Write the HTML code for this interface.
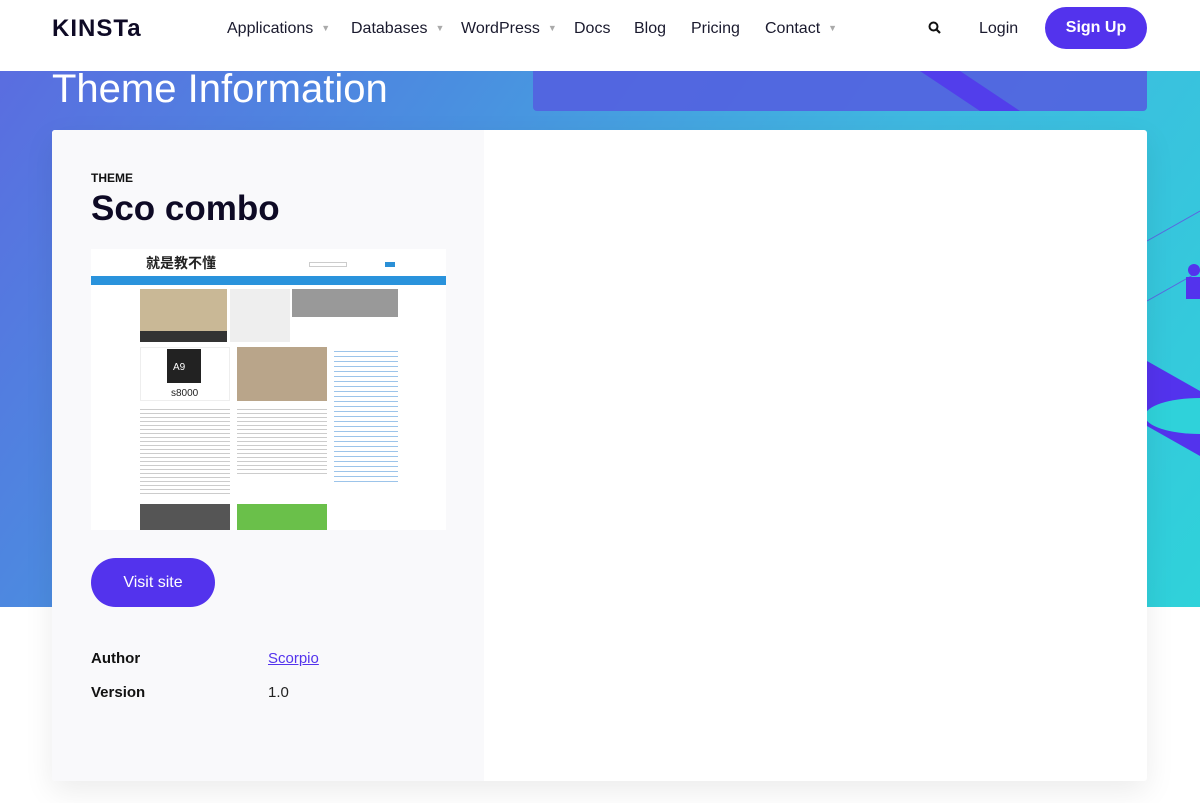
<!DOCTYPE html>
<html><head><meta charset="utf-8"><style>
*{margin:0;padding:0;box-sizing:border-box}
body{width:1200px;height:803px;overflow:hidden;background:#fff;font-family:"Liberation Sans","Noto Sans CJK TC",sans-serif;position:relative}
.hdr{position:absolute;top:0;left:0;width:1200px;height:71px;background:#fff;z-index:5}
.logo{position:absolute;left:52px;top:15px;font-size:24px;font-weight:bold;color:#0e0a25;letter-spacing:1px}
.nav{position:absolute;top:20px;font-size:16px;color:#1a1a2e}
.car{color:#aaa;font-size:9px;margin-left:8px;vertical-align:2px}
.btn{position:absolute;left:1045px;top:7px;width:102px;height:42px;border-radius:21px;background:#5333ed;color:#fff;font-size:16px;font-weight:bold;text-align:center;line-height:42px}
.hero{position:absolute;top:71px;left:0;width:1200px;height:536px;background:linear-gradient(125deg,#5a6de0 0%,#4a8fe0 30%,#3fb8e0 60%,#2fd2da 100%);overflow:hidden}
.card{position:absolute;left:52px;top:130px;width:1095px;height:651px;background:#fff;border-radius:3px;box-shadow:0 10px 30px rgba(0,0,0,.08);z-index:2;overflow:hidden}
.lp{position:absolute;left:0;top:0;width:432px;height:651px;background:#f9f9fb}
.shot{position:absolute;left:39px;top:119px;width:355px;height:281px;background:#fff;overflow:hidden}
</style></head><body>
<div class="hdr">
<div class="logo">KINSTa</div>
<div class="nav" style="left:227px">Applications<span class="car">▼</span></div>
<div class="nav" style="left:351px">Databases<span class="car">▼</span></div>
<div class="nav" style="left:461px">WordPress<span class="car">▼</span></div>
<div class="nav" style="left:574px">Docs</div>
<div class="nav" style="left:634px">Blog</div>
<div class="nav" style="left:691px">Pricing</div>
<div class="nav" style="left:765px">Contact<span class="car">▼</span></div>
<svg style="position:absolute;left:928px;top:21px" width="14" height="14" viewBox="0 0 14 14"><circle cx="5.5" cy="5.5" r="4" fill="none" stroke="#111" stroke-width="2"/><path d="M8.5 8.5L12 12" stroke="#111" stroke-width="2.2"/></svg>
<div class="nav" style="left:979px">Login</div>
<div class="btn">Sign Up</div>
</div>
<div class="hero">
<div style="position:absolute;left:533px;top:0;width:614px;height:40px;background:#5360e0;border-radius:0 0 4px 4px;opacity:.9"></div>
<svg style="position:absolute;left:0;top:0" width="1200" height="536"><polygon points="920,0 960,0 1020,40 980,40" fill="#5333ed" opacity=".8"/><polygon points="1147,290 1200,320 1200,385 1147,355" fill="#5333ed"/><ellipse cx="1200" cy="345" rx="55" ry="18" fill="#2fd2da"/><line x1="1147" y1="170" x2="1200" y2="140" stroke="#5a66e0" stroke-width="1"/><line x1="1147" y1="230" x2="1200" y2="200" stroke="#5a66e0" stroke-width="1"/><circle cx="1194" cy="199" r="6" fill="#5333ed"/><rect x="1186" y="206" width="14" height="22" fill="#5333ed"/></svg>
<div style="position:absolute;left:52px;top:-4px;font-size:40px;color:#fff">Theme Information</div>
</div>
<div class="card">
<div class="lp">
<div style="position:absolute;left:39px;top:41px;font-size:12px;font-weight:bold;color:#111">THEME</div>
<div style="position:absolute;left:39px;top:59px;font-size:35px;font-weight:bold;color:#0e0a25">Sco combo</div>
<div class="shot">
<div style="position:absolute;left:55px;top:4px;font-size:14px;font-weight:bold;color:#222">就是教不懂</div>
<div style="position:absolute;left:218px;top:13px;width:38px;height:5px;border:1px solid #ccc"></div>
<div style="position:absolute;left:294px;top:13px;width:10px;height:5px;background:#2a8fd6"></div>
<div style="position:absolute;left:0;top:27px;width:355px;height:9px;background:#2a93dc"></div>
<div style="position:absolute;left:49px;top:40px;width:87px;height:53px;background:#c9b896"></div>
<div style="position:absolute;left:49px;top:82px;width:87px;height:11px;background:#333"></div>
<div style="position:absolute;left:139px;top:40px;width:60px;height:53px;background:#eee"></div>
<div style="position:absolute;left:201px;top:40px;width:106px;height:28px;background:#999"></div>
<div style="position:absolute;left:49px;top:98px;width:90px;height:54px;background:#fff;border:1px solid #eee"></div>
<div style="position:absolute;left:76px;top:100px;width:34px;height:34px;background:#222"></div>
<div style="position:absolute;left:82px;top:113px;font-size:10px;color:#fff">A9</div>
<div style="position:absolute;left:80px;top:139px;font-size:10px;color:#222">s8000</div>
<div style="position:absolute;left:146px;top:98px;width:90px;height:54px;background:#b9a58a"></div>
<div style="position:absolute;left:49px;top:157px;width:90px;height:90px;background:repeating-linear-gradient(#fff 0 3px,#ccc 3px 4px)"></div>
<div style="position:absolute;left:146px;top:157px;width:90px;height:70px;background:repeating-linear-gradient(#fff 0 3px,#ccc 3px 4px)"></div>
<div style="position:absolute;left:243px;top:98px;width:64px;height:135px;background:repeating-linear-gradient(#fff 0 4px,#9cc4ea 4px 5px)"></div>
<div style="position:absolute;left:49px;top:255px;width:90px;height:26px;background:#555"></div>
<div style="position:absolute;left:146px;top:255px;width:90px;height:26px;background:#6ac04a"></div>
</div>
<div style="position:absolute;left:39px;top:428px;width:124px;height:49px;border-radius:25px;background:#5333ed;color:#fff;font-size:16px;text-align:center;line-height:49px">Visit site</div>
<div style="position:absolute;left:39px;top:520px;font-size:15px;font-weight:bold;color:#111">Author</div>
<div style="position:absolute;left:216px;top:520px;font-size:15px;color:#5333ed;text-decoration:underline">Scorpio</div>
<div style="position:absolute;left:39px;top:554px;font-size:15px;font-weight:bold;color:#111">Version</div>
<div style="position:absolute;left:216px;top:554px;font-size:15px;color:#222">1.0</div>
</div>
</div>
</body></html>
